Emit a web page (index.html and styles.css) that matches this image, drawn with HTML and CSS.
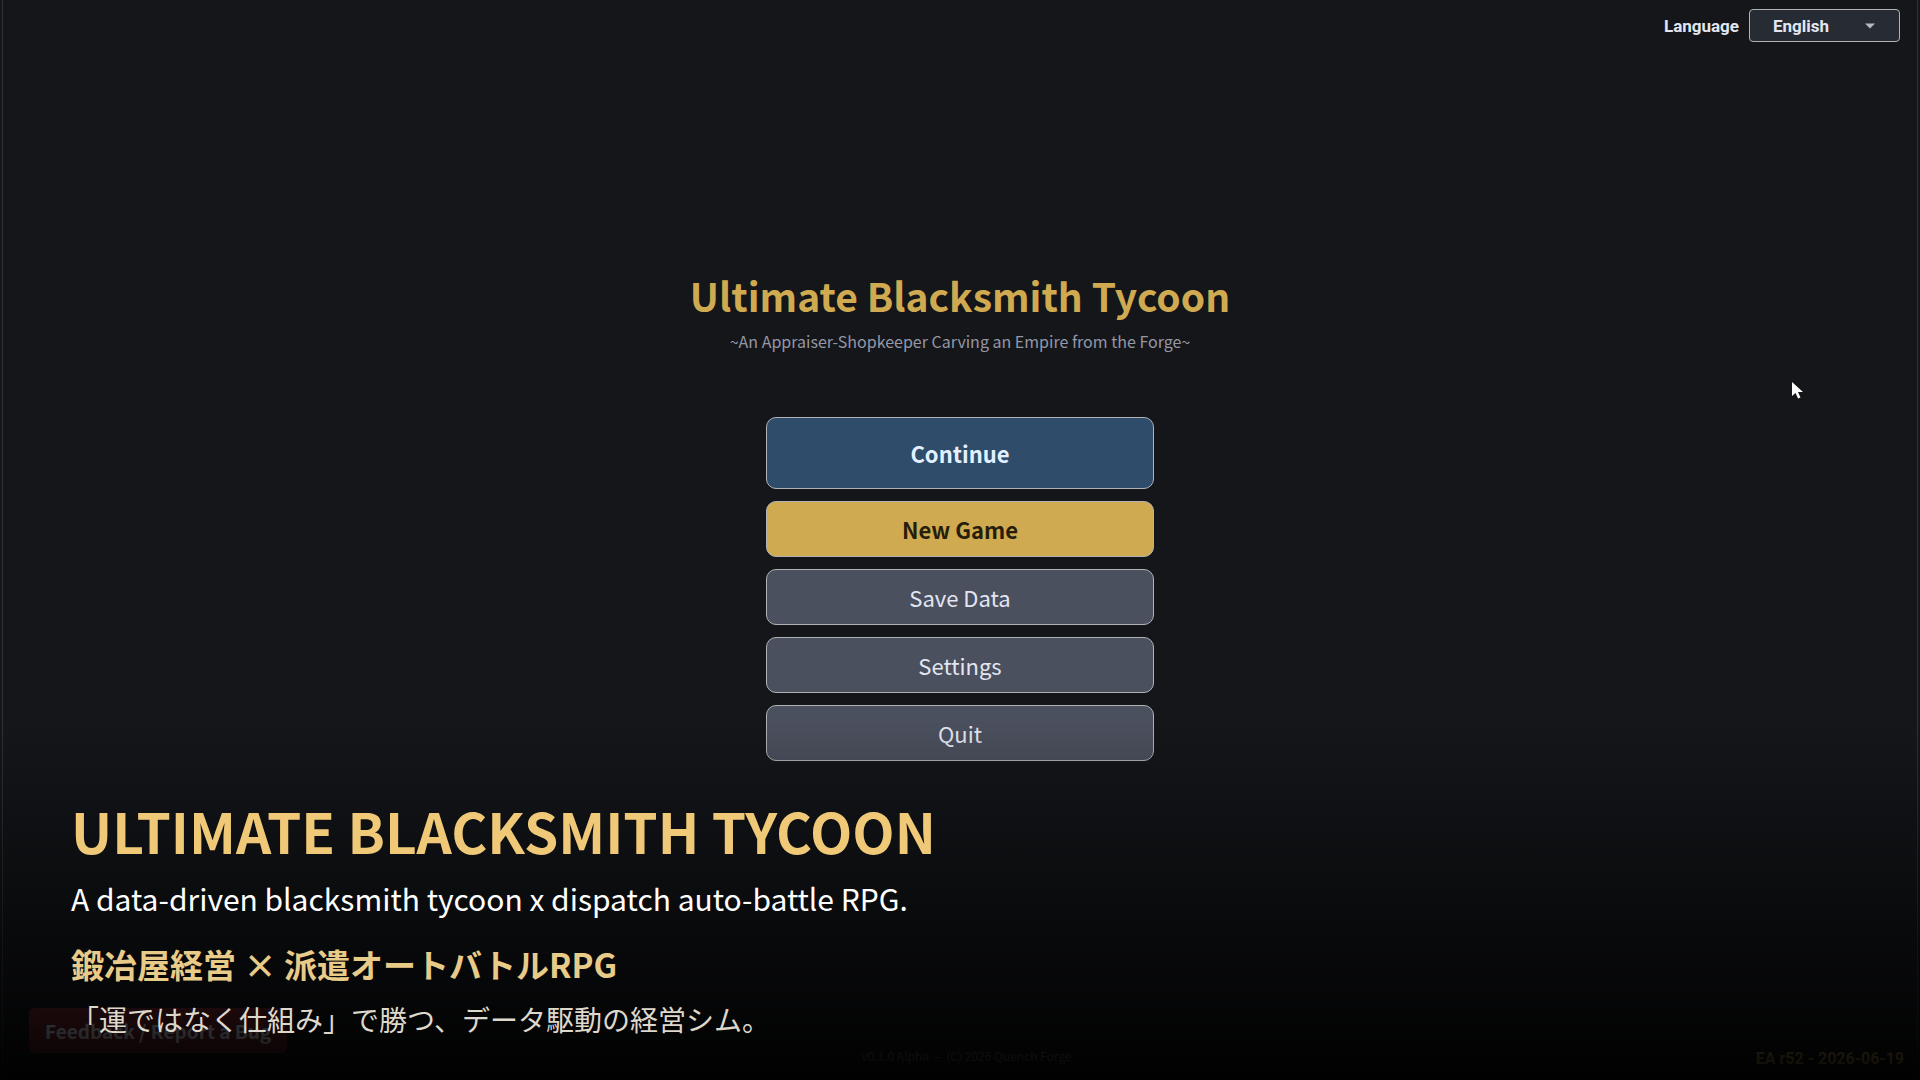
FILE: index.html
```html
<!DOCTYPE html>
<html lang="en">
<head>
  <meta charset="UTF-8" />
  <meta name="viewport" content="width=device-width, initial-scale=1.0"/>
  <title>Ultimate Blacksmith Tycoon</title>
  <link rel="stylesheet" href="styles.css">
</head>
<body>

  <div class="screen">
    <header class="top-bar">
      <label for="language">Language</label>
      <div class="select-wrap">
        <select id="language">
          <option>English</option>
          <option lang="ja">日本語</option>
        </select>
        <svg class="arrow" viewBox="0 0 10 6" aria-hidden="true"><path d="M0 0.5h10L5 5.5z"/></svg>
      </div>
    </header>

    <main class="menu">
      <h1>Ultimate Blacksmith Tycoon</h1>
      <p class="subtitle">~An Appraiser-Shopkeeper Carving an Empire from the Forge~</p>
      <nav class="menu-buttons">
        <button type="button" class="continue">Continue</button>
        <button type="button" class="new-game">New Game</button>
        <button type="button">Save Data</button>
        <button type="button">Settings</button>
        <button type="button">Quit</button>
      </nav>
    </main>

    <footer class="bottom-bar">
      <button type="button" class="feedback">Feedback / Report a Bug</button>
      <span class="version">v0.1.0 Alpha &nbsp;–&nbsp; (C) 2026 Quench Forge</span>
      <span class="build">EA r52 - 2026-06-19</span>
    </footer>
  </div>

  <!-- promo caption over the lower part of the title screen -->
  <section class="caption">
    <h2>ULTIMATE BLACKSMITH TYCOON</h2>
    <p class="tagline">A data-driven blacksmith tycoon x dispatch auto-battle RPG.</p>
    <p class="tagline-ja-title" lang="ja">鍛冶屋経営 × 派遣オートバトルRPG</p>
    <p class="tagline-ja" lang="ja">「運ではなく仕組み」で勝つ、データ駆動の経営シム。</p>
  </section>

  <svg class="cursor" viewBox="0 0 11 17" aria-hidden="true"><path d="M0 0v14l3.5-3 2.6 5.5 2.4-1.1L6 10h5z"/></svg>

</body>
</html>
```

FILE: styles.css
```css
* {
  margin: 0;
  padding: 0;
  box-sizing: border-box;
}
body {
  position: relative;
  min-height: 100vh;
  padding: 0 2px;
  background: #14161a;
  color: #e2e6f2;
  font-family: 'Noto Sans CJK JP', sans-serif;
  overflow: hidden;
}
button {
  font-family: inherit;
  cursor: pointer;
}
.screen {
  display: flex;
  flex-direction: column;
  min-height: 100vh;
  border: 1px solid #303135;
  border-width: 0 1px;
}

/* language picker */
.top-bar {
  display: flex;
  justify-content: flex-end;
  align-items: center;
  gap: 10px;
  padding: 9px 17px 0;
  font-family: Roboto, sans-serif;
  font-size: 17px;
  font-weight: 700;
}
.select-wrap {
  position: relative;
}
select {
  display: block;
  width: 151px;
  height: 33px;
  padding: 0 40px 0 23px;
  appearance: none;
  background: #262b34;
  color: #e2e6f2;
  border: 1px solid #b0b2b6;
  border-radius: 4px;
  font: inherit;
}
.arrow {
  position: absolute;
  top: 14px;
  right: 25px;
  width: 10px;
  height: 6px;
  fill: #b6b9c0;
  pointer-events: none;
}

/* title and menu */
.menu {
  flex: 1;
  display: flex;
  flex-direction: column;
  align-items: center;
  justify-content: center;
  padding-bottom: 22px;
}
h1 {
  margin-bottom: 4px;
  color: #d0aa50;
  font-size: 39px;
  font-weight: 700;
  line-height: 56px;
}
.subtitle {
  margin-bottom: 62px;
  color: #9497a6;
  font-size: 16px;
  line-height: 28px;
}
.menu-buttons {
  display: flex;
  flex-direction: column;
  gap: 12px;
  width: 388px;
}
.menu-buttons button {
  height: 56px;
  background: #4b505e;
  color: #e2e6f2;
  border: 1px solid #b0b2b6;
  border-radius: 10px;
  font-size: 22px;
}
.menu-buttons .continue {
  height: 72px;
  background: #2f4c6b;
  color: #e4f0ff;
  font-weight: 700;
}
.menu-buttons .new-game {
  background: #d0aa50;
  color: #261d0a;
  font-weight: 700;
}

/* footer */
.bottom-bar {
  display: grid;
  grid-template-columns: 1fr auto 1fr;
  align-items: end;
  padding: 0 13px 10px 26px;
}
.feedback {
  justify-self: start;
  height: 45px;
  margin-bottom: 17px;
  padding: 0 16px;
  background: #70262e;
  color: #e2e6f2;
  border: 0;
  border-radius: 6px;
  font-size: 19px;
  font-weight: 700;
}
.version {
  color: #74767e;
  font-size: 12px;
  line-height: 28px;
}
.build {
  justify-self: end;
  color: #d0aa50;
  font-family: Roboto, sans-serif;
  font-size: 16px;
  font-weight: 700;
  line-height: 22px;
}

/* caption overlay */
.caption {
  position: absolute;
  left: 0;
  right: 0;
  bottom: 0;
  padding: 73px 71px 41px;
  background: linear-gradient(rgba(0, 0, 0, 0), rgba(0, 0, 0, 0.95));
  pointer-events: none;
}
.caption h2 {
  color: #efc878;
  font-size: 55px;
  font-weight: 700;
  line-height: 74px;
}
.tagline {
  color: #fff;
  font-size: 30px;
  line-height: 62px;
}
.tagline-ja-title {
  color: #e8cb88;
  font-size: 33px;
  font-weight: 700;
  line-height: 70px;
}
.tagline-ja {
  color: #ded8cc;
  font-size: 28px;
  line-height: 40px;
}
.cursor {
  position: absolute;
  top: 382px;
  right: 117px;
  width: 11px;
  height: 17px;
  fill: #fff;
}
```
